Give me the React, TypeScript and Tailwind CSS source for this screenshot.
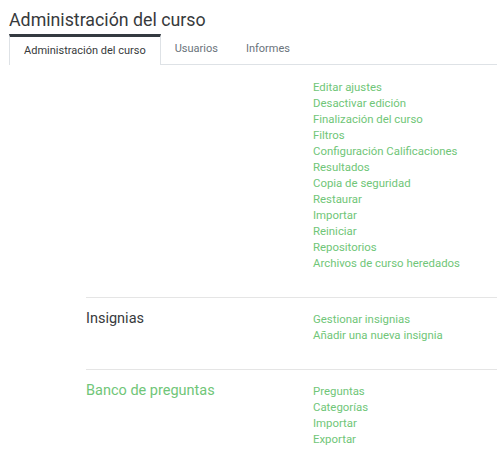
const sections = [
  {
    title: "",
    links: [
      "Editar ajustes",
      "Desactivar edición",
      "Finalización del curso",
      "Filtros",
      "Configuración Calificaciones",
      "Resultados",
      "Copia de seguridad",
      "Restaurar",
      "Importar",
      "Reiniciar",
      "Repositorios",
      "Archivos de curso heredados",
    ],
  },
  { title: "Insignias", links: ["Gestionar insignias", "Añadir una nueva insignia"] },
  {
    title: "Banco de preguntas",
    green: true,
    links: ["Preguntas", "Categorías", "Importar", "Exportar"],
  },
];

const tabs = ["Administración del curso", "Usuarios", "Informes"];

export default function App() {
  return (
    <div className="min-h-[458px] bg-white font-['Roboto',sans-serif] text-[#373a3c]">
      <h2 className="pl-[9px] pt-[8px] text-[17.8px] leading-[24px]">Administración del curso</h2>
      {/* Tabs */}
      <ul className="mt-[2px] ml-[9px] flex border-b border-[#dee2e6] text-[11px]">
        {tabs.map((tab, i) =>
          i === 0 ? (
            <li
              key={tab}
              className="-mb-px border-x border-t-[3px] border-[#dee2e6] border-t-[#343a40] bg-white px-[14px] pt-[6px] pb-[6px] leading-[16px]"
            >
              {tab}
            </li>
          ) : (
            <li key={tab} className="px-[14px] pt-[7px] pb-[6px] leading-[16px] text-[#6a737b]">
              {tab}
            </li>
          )
        )}
      </ul>
      <div className="pt-[12px] pl-[86px]">
        {sections.map((s, i) => (
          <div
            key={i}
            className={`grid grid-cols-[227px_1fr] pb-[26px] ${i > 0 ? "border-t border-[#e5e5e5] pt-[11px]" : ""}`}
          >
            <div className={`text-[14.5px] leading-[20px] ${s.green ? "text-[#70c678]" : "text-[#373a3c]"}`}>
              {s.title}
            </div>
            <ul className="pt-[2px] text-[11.4px] leading-[16px] text-[#70c678]">
              {s.links.map((l) => (
                <li key={l}>{l}</li>
              ))}
            </ul>
          </div>
        ))}
      </div>
    </div>
  );
}
